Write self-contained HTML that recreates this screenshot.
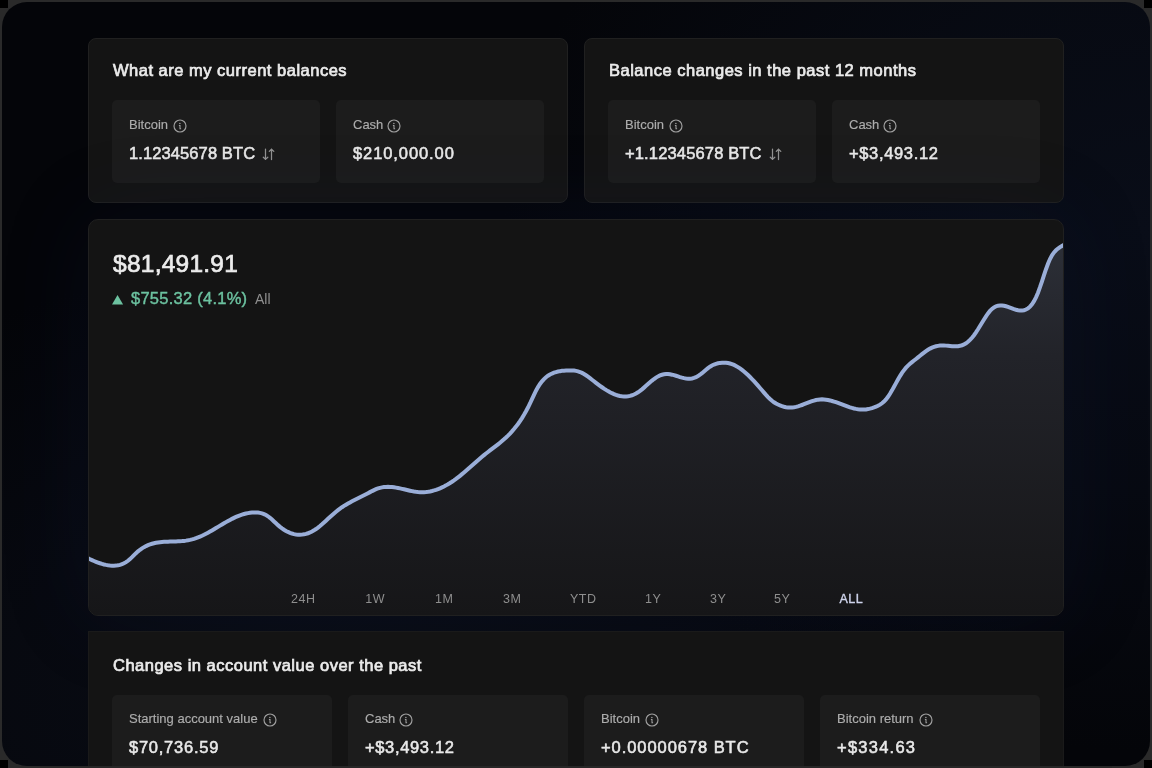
<!DOCTYPE html>
<html><head><meta charset="utf-8">
<style>
*{box-sizing:border-box;margin:0;padding:0}
html,body{width:1152px;height:768px;overflow:hidden;background:#2a2a2a;font-family:"Liberation Sans",sans-serif}
.a{position:absolute;white-space:nowrap;line-height:20px;will-change:transform}
.corner{position:absolute;width:8px;height:8px;background:#000}
.frame{position:absolute;left:2px;top:2px;width:1148px;height:764px;border-radius:25px;overflow:hidden;
 background:radial-gradient(ellipse 650px 520px at 1150px 230px,#090d18 0%,rgba(9,13,24,0.6) 50%,rgba(9,13,24,0) 100%),radial-gradient(ellipse 700px 420px at 330px 680px,#090c15 0%,rgba(9,12,21,0.5) 55%,rgba(9,12,21,0) 100%),#040509;}
.card{position:absolute;background:#141414;border:1px solid #202020;border-radius:8px}
.tile{position:absolute;background:#1c1c1c;border-radius:5px}
.ti{font-size:16.5px;color:#ebebeb;-webkit-text-stroke:0.7px #ebebeb;letter-spacing:0.5px}
.lb{font-size:13px;color:#adadad;-webkit-text-stroke:0.15px #adadad}
.vl{font-size:16.5px;color:#e9e9e9;-webkit-text-stroke:0.55px #e9e9e9;letter-spacing:0.2px}
.tr{font-size:12.5px;color:#8e8e8e;transform:translateX(-50%);letter-spacing:0.6px;text-indent:0.6px}
</style></head><body>
<svg width="0" height="0" style="position:absolute">
 <defs>
  <g id="info"><circle cx="7" cy="7" r="6" fill="none" stroke="#a0a0a0" stroke-width="1.15"/><circle cx="6.9" cy="4.4" r="0.75" fill="#a0a0a0"/><path d="M5.9,6.4 H7 V9.7 H8.1" fill="none" stroke="#a0a0a0" stroke-width="1.05"/></g>
  <g id="arr" fill="none" stroke="#929292" stroke-width="1.25" stroke-linecap="round" stroke-linejoin="round"><path d="M3.5,1 V11.4 M1.3,9.2 L3.5,11.4 L5.8,9.2"/><path d="M9.5,11.6 V1.2 M7.3,3.4 L9.5,1.2 L11.8,3.4"/></g>
 </defs>
</svg>
<div class="corner" style="left:0;top:0"></div><div class="corner" style="right:0;top:0"></div>
<div class="corner" style="left:0;bottom:0"></div><div class="corner" style="right:0;bottom:0"></div>
<div class="frame"></div>

<!-- card 1 -->
<div class="card" style="left:88px;top:38px;width:480px;height:165px"></div>
<div class="tile" style="left:112px;top:100px;width:208px;height:83px"></div>
<div class="tile" style="left:336px;top:100px;width:208px;height:83px"></div>
<div class="a ti" style="left:113px;top:60px">What are my current balances</div>
<div class="a lb" style="left:129px;top:115px">Bitcoin</div>
<svg class="a" style="left:173.4px;top:118.5px" width="14" height="14"><use href="#info"/></svg>
<div class="a vl" style="left:129px;top:143px;letter-spacing:0.1px">1.12345678 BTC</div>
<svg class="a" style="left:262px;top:147.5px" width="14" height="14"><use href="#arr"/></svg>
<div class="a lb" style="left:353px;top:115px">Cash</div>
<svg class="a" style="left:387.4px;top:118.5px" width="14" height="14"><use href="#info"/></svg>
<div class="a vl" style="left:353px;top:143px;letter-spacing:0.91px">$210,000.00</div>

<!-- card 2 -->
<div class="card" style="left:584px;top:38px;width:480px;height:165px"></div>
<div class="tile" style="left:608px;top:100px;width:208px;height:83px"></div>
<div class="tile" style="left:832px;top:100px;width:208px;height:83px"></div>
<div class="a ti" style="left:609px;top:60px">Balance changes in the past 12 months</div>
<div class="a lb" style="left:625px;top:115px">Bitcoin</div>
<svg class="a" style="left:669.4px;top:118.5px" width="14" height="14"><use href="#info"/></svg>
<div class="a vl" style="left:625px;top:143px;letter-spacing:0.15px">+1.12345678 BTC</div>
<svg class="a" style="left:768.5px;top:147.5px" width="14" height="14"><use href="#arr"/></svg>
<div class="a lb" style="left:849px;top:115px">Cash</div>
<svg class="a" style="left:883.4px;top:118.5px" width="14" height="14"><use href="#info"/></svg>
<div class="a vl" style="left:849px;top:143px;letter-spacing:0.65px">+$3,493.12</div>

<!-- chart card -->
<div class="card" style="left:88px;top:219px;width:976px;height:397px;overflow:hidden;border-radius:10px;box-shadow:0 0 90px 0 rgba(25,40,90,0.16)">
 <svg width="976" height="397" viewBox="88 219 976 397" style="position:absolute;left:-1px;top:-1px">
  <defs><linearGradient id="g" x1="0" y1="245" x2="0" y2="615" gradientUnits="userSpaceOnUse">
   <stop offset="0" stop-color="#2c2f37"/><stop offset="0.3" stop-color="#222329"/><stop offset="1" stop-color="#161618"/></linearGradient></defs>
  <path d="M86.0,557.46 L88.0,558.36 L90.0,559.26 L92.0,560.13 L94.0,560.98 L96.0,561.78 L98.0,562.54 L100.0,563.25 L102.0,563.88 L104.0,564.44 L106.0,564.91 L108.0,565.28 L110.0,565.55 L112.0,565.71 L114.0,565.73 L116.0,565.61 L118.0,565.33 L120.0,564.86 L122.0,564.19 L124.0,563.30 L126.0,562.17 L128.0,560.77 L130.0,559.09 L132.0,557.16 L134.0,555.12 L136.0,553.14 L138.0,551.35 L140.0,549.76 L142.0,548.36 L144.0,547.13 L146.0,546.07 L148.0,545.16 L150.0,544.39 L152.0,543.75 L154.0,543.22 L156.0,542.79 L158.0,542.45 L160.0,542.18 L162.0,541.98 L164.0,541.83 L166.0,541.72 L168.0,541.64 L170.0,541.59 L172.0,541.54 L174.0,541.49 L176.0,541.44 L178.0,541.36 L180.0,541.25 L182.0,541.10 L184.0,540.90 L186.0,540.64 L188.0,540.31 L190.0,539.90 L192.0,539.40 L194.0,538.83 L196.0,538.18 L198.0,537.44 L200.0,536.62 L202.0,535.72 L204.0,534.76 L206.0,533.74 L208.0,532.67 L210.0,531.55 L212.0,530.41 L214.0,529.23 L216.0,528.04 L218.0,526.84 L220.0,525.64 L222.0,524.45 L224.0,523.27 L226.0,522.11 L228.0,520.98 L230.0,519.89 L232.0,518.85 L234.0,517.87 L236.0,516.94 L238.0,516.09 L240.0,515.32 L242.0,514.63 L244.0,514.04 L246.0,513.53 L248.0,513.12 L250.0,512.80 L252.0,512.59 L254.0,512.48 L256.0,512.48 L258.0,512.61 L260.0,512.89 L262.0,513.37 L264.0,514.08 L266.0,515.04 L268.0,516.28 L270.0,517.82 L272.0,519.57 L274.0,521.43 L276.0,523.32 L278.0,525.14 L280.0,526.82 L282.0,528.34 L284.0,529.71 L286.0,530.91 L288.0,531.95 L290.0,532.83 L292.0,533.54 L294.0,534.10 L296.0,534.48 L298.0,534.70 L300.0,534.75 L302.0,534.63 L304.0,534.34 L306.0,533.89 L308.0,533.26 L310.0,532.46 L312.0,531.49 L314.0,530.35 L316.0,529.04 L318.0,527.58 L320.0,525.98 L322.0,524.29 L324.0,522.52 L326.0,520.69 L328.0,518.84 L330.0,516.99 L332.0,515.17 L334.0,513.40 L336.0,511.70 L338.0,510.11 L340.0,508.62 L342.0,507.23 L344.0,505.92 L346.0,504.68 L348.0,503.51 L350.0,502.40 L352.0,501.33 L354.0,500.29 L356.0,499.28 L358.0,498.29 L360.0,497.30 L362.0,496.30 L364.0,495.29 L366.0,494.26 L368.0,493.19 L370.0,492.12 L372.0,491.08 L374.0,490.10 L376.0,489.21 L378.0,488.44 L380.0,487.82 L382.0,487.36 L384.0,487.06 L386.0,486.88 L388.0,486.84 L390.0,486.90 L392.0,487.06 L394.0,487.30 L396.0,487.61 L398.0,487.98 L400.0,488.40 L402.0,488.85 L404.0,489.32 L406.0,489.79 L408.0,490.25 L410.0,490.70 L412.0,491.11 L414.0,491.48 L416.0,491.78 L418.0,492.02 L420.0,492.17 L422.0,492.22 L424.0,492.17 L426.0,492.01 L428.0,491.76 L430.0,491.42 L432.0,490.98 L434.0,490.44 L436.0,489.82 L438.0,489.10 L440.0,488.30 L442.0,487.41 L444.0,486.43 L446.0,485.37 L448.0,484.24 L450.0,483.02 L452.0,481.72 L454.0,480.35 L456.0,478.91 L458.0,477.39 L460.0,475.81 L462.0,474.17 L464.0,472.48 L466.0,470.75 L468.0,468.99 L470.0,467.22 L472.0,465.44 L474.0,463.66 L476.0,461.89 L478.0,460.14 L480.0,458.42 L482.0,456.74 L484.0,455.11 L486.0,453.53 L488.0,451.98 L490.0,450.46 L492.0,448.95 L494.0,447.43 L496.0,445.90 L498.0,444.34 L500.0,442.73 L502.0,441.06 L504.0,439.32 L506.0,437.49 L508.0,435.57 L510.0,433.53 L512.0,431.36 L514.0,429.05 L516.0,426.59 L518.0,423.96 L520.0,421.13 L522.0,418.09 L524.0,414.82 L526.0,411.31 L528.0,407.53 L530.0,403.47 L532.0,399.16 L534.0,394.81 L536.0,390.70 L538.0,387.07 L540.0,383.96 L542.0,381.32 L544.0,379.10 L546.0,377.26 L548.0,375.75 L550.0,374.52 L552.0,373.53 L554.0,372.72 L556.0,372.07 L558.0,371.55 L560.0,371.15 L562.0,370.85 L564.0,370.64 L566.0,370.50 L568.0,370.42 L570.0,370.39 L572.0,370.44 L574.0,370.59 L576.0,370.89 L578.0,371.35 L580.0,372.01 L582.0,372.90 L584.0,373.99 L586.0,375.27 L588.0,376.67 L590.0,378.17 L592.0,379.72 L594.0,381.29 L596.0,382.84 L598.0,384.36 L600.0,385.83 L602.0,387.25 L604.0,388.61 L606.0,389.89 L608.0,391.09 L610.0,392.20 L612.0,393.20 L614.0,394.09 L616.0,394.85 L618.0,395.48 L620.0,395.96 L622.0,396.29 L624.0,396.45 L626.0,396.44 L628.0,396.24 L630.0,395.85 L632.0,395.27 L634.0,394.49 L636.0,393.50 L638.0,392.31 L640.0,390.92 L642.0,389.34 L644.0,387.64 L646.0,385.87 L648.0,384.06 L650.0,382.28 L652.0,380.58 L654.0,379.00 L656.0,377.59 L658.0,376.40 L660.0,375.46 L662.0,374.75 L664.0,374.29 L666.0,374.06 L668.0,374.06 L670.0,374.28 L672.0,374.67 L674.0,375.18 L676.0,375.78 L678.0,376.42 L680.0,377.06 L682.0,377.65 L684.0,378.15 L686.0,378.53 L688.0,378.72 L690.0,378.70 L692.0,378.45 L694.0,377.94 L696.0,377.16 L698.0,376.10 L700.0,374.74 L702.0,373.15 L704.0,371.45 L706.0,369.72 L708.0,368.10 L710.0,366.67 L712.0,365.49 L714.0,364.54 L716.0,363.80 L718.0,363.26 L720.0,362.90 L722.0,362.70 L724.0,362.66 L726.0,362.77 L728.0,363.05 L730.0,363.49 L732.0,364.12 L734.0,364.93 L736.0,365.92 L738.0,367.08 L740.0,368.39 L742.0,369.86 L744.0,371.46 L746.0,373.19 L748.0,375.04 L750.0,376.99 L752.0,379.03 L754.0,381.16 L756.0,383.36 L758.0,385.62 L760.0,387.94 L762.0,390.29 L764.0,392.64 L766.0,394.92 L768.0,397.07 L770.0,399.04 L772.0,400.76 L774.0,402.24 L776.0,403.49 L778.0,404.54 L780.0,405.41 L782.0,406.14 L784.0,406.73 L786.0,407.17 L788.0,407.45 L790.0,407.57 L792.0,407.51 L794.0,407.26 L796.0,406.87 L798.0,406.34 L800.0,405.71 L802.0,405.00 L804.0,404.24 L806.0,403.45 L808.0,402.66 L810.0,401.90 L812.0,401.20 L814.0,400.57 L816.0,400.05 L818.0,399.66 L820.0,399.43 L822.0,399.36 L824.0,399.44 L826.0,399.66 L828.0,399.99 L830.0,400.43 L832.0,400.96 L834.0,401.56 L836.0,402.22 L838.0,402.93 L840.0,403.66 L842.0,404.41 L844.0,405.17 L846.0,405.91 L848.0,406.62 L850.0,407.29 L852.0,407.90 L854.0,408.44 L856.0,408.89 L858.0,409.25 L860.0,409.49 L862.0,409.59 L864.0,409.56 L866.0,409.39 L868.0,409.09 L870.0,408.66 L872.0,408.11 L874.0,407.45 L876.0,406.69 L878.0,405.78 L880.0,404.67 L882.0,403.28 L884.0,401.55 L886.0,399.40 L888.0,396.78 L890.0,393.73 L892.0,390.37 L894.0,386.80 L896.0,383.16 L898.0,379.55 L900.0,376.09 L902.0,372.91 L904.0,370.10 L906.0,367.69 L908.0,365.61 L910.0,363.78 L912.0,362.11 L914.0,360.54 L916.0,358.97 L918.0,357.36 L920.0,355.73 L922.0,354.11 L924.0,352.55 L926.0,351.08 L928.0,349.75 L930.0,348.60 L932.0,347.64 L934.0,346.87 L936.0,346.28 L938.0,345.85 L940.0,345.59 L942.0,345.47 L944.0,345.50 L946.0,345.62 L948.0,345.80 L950.0,346.01 L952.0,346.18 L954.0,346.29 L956.0,346.30 L958.0,346.16 L960.0,345.82 L962.0,345.26 L964.0,344.42 L966.0,343.27 L968.0,341.77 L970.0,339.94 L972.0,337.76 L974.0,335.24 L976.0,332.40 L978.0,329.29 L980.0,326.02 L982.0,322.70 L984.0,319.43 L986.0,316.31 L988.0,313.44 L990.0,310.93 L992.0,308.89 L994.0,307.36 L996.0,306.32 L998.0,305.69 L1000.0,305.43 L1002.0,305.48 L1004.0,305.78 L1006.0,306.28 L1008.0,306.91 L1010.0,307.63 L1012.0,308.38 L1014.0,309.10 L1016.0,309.73 L1018.0,310.22 L1020.0,310.51 L1022.0,310.54 L1024.0,310.25 L1026.0,309.55 L1028.0,308.37 L1030.0,306.64 L1032.0,304.28 L1034.0,301.21 L1036.0,297.36 L1038.0,292.66 L1040.0,287.21 L1042.0,281.28 L1044.0,275.18 L1046.0,269.21 L1048.0,263.73 L1050.0,259.05 L1052.0,255.28 L1054.0,252.43 L1056.0,250.28 L1058.0,248.58 L1060.0,247.17 L1062.0,245.92 L1064.0,244.72 L1066.0,243.43 L1068.0,241.95 L1068,620 L86,620 Z" fill="url(#g)"/>
  <path d="M86.0,557.46 L88.0,558.36 L90.0,559.26 L92.0,560.13 L94.0,560.98 L96.0,561.78 L98.0,562.54 L100.0,563.25 L102.0,563.88 L104.0,564.44 L106.0,564.91 L108.0,565.28 L110.0,565.55 L112.0,565.71 L114.0,565.73 L116.0,565.61 L118.0,565.33 L120.0,564.86 L122.0,564.19 L124.0,563.30 L126.0,562.17 L128.0,560.77 L130.0,559.09 L132.0,557.16 L134.0,555.12 L136.0,553.14 L138.0,551.35 L140.0,549.76 L142.0,548.36 L144.0,547.13 L146.0,546.07 L148.0,545.16 L150.0,544.39 L152.0,543.75 L154.0,543.22 L156.0,542.79 L158.0,542.45 L160.0,542.18 L162.0,541.98 L164.0,541.83 L166.0,541.72 L168.0,541.64 L170.0,541.59 L172.0,541.54 L174.0,541.49 L176.0,541.44 L178.0,541.36 L180.0,541.25 L182.0,541.10 L184.0,540.90 L186.0,540.64 L188.0,540.31 L190.0,539.90 L192.0,539.40 L194.0,538.83 L196.0,538.18 L198.0,537.44 L200.0,536.62 L202.0,535.72 L204.0,534.76 L206.0,533.74 L208.0,532.67 L210.0,531.55 L212.0,530.41 L214.0,529.23 L216.0,528.04 L218.0,526.84 L220.0,525.64 L222.0,524.45 L224.0,523.27 L226.0,522.11 L228.0,520.98 L230.0,519.89 L232.0,518.85 L234.0,517.87 L236.0,516.94 L238.0,516.09 L240.0,515.32 L242.0,514.63 L244.0,514.04 L246.0,513.53 L248.0,513.12 L250.0,512.80 L252.0,512.59 L254.0,512.48 L256.0,512.48 L258.0,512.61 L260.0,512.89 L262.0,513.37 L264.0,514.08 L266.0,515.04 L268.0,516.28 L270.0,517.82 L272.0,519.57 L274.0,521.43 L276.0,523.32 L278.0,525.14 L280.0,526.82 L282.0,528.34 L284.0,529.71 L286.0,530.91 L288.0,531.95 L290.0,532.83 L292.0,533.54 L294.0,534.10 L296.0,534.48 L298.0,534.70 L300.0,534.75 L302.0,534.63 L304.0,534.34 L306.0,533.89 L308.0,533.26 L310.0,532.46 L312.0,531.49 L314.0,530.35 L316.0,529.04 L318.0,527.58 L320.0,525.98 L322.0,524.29 L324.0,522.52 L326.0,520.69 L328.0,518.84 L330.0,516.99 L332.0,515.17 L334.0,513.40 L336.0,511.70 L338.0,510.11 L340.0,508.62 L342.0,507.23 L344.0,505.92 L346.0,504.68 L348.0,503.51 L350.0,502.40 L352.0,501.33 L354.0,500.29 L356.0,499.28 L358.0,498.29 L360.0,497.30 L362.0,496.30 L364.0,495.29 L366.0,494.26 L368.0,493.19 L370.0,492.12 L372.0,491.08 L374.0,490.10 L376.0,489.21 L378.0,488.44 L380.0,487.82 L382.0,487.36 L384.0,487.06 L386.0,486.88 L388.0,486.84 L390.0,486.90 L392.0,487.06 L394.0,487.30 L396.0,487.61 L398.0,487.98 L400.0,488.40 L402.0,488.85 L404.0,489.32 L406.0,489.79 L408.0,490.25 L410.0,490.70 L412.0,491.11 L414.0,491.48 L416.0,491.78 L418.0,492.02 L420.0,492.17 L422.0,492.22 L424.0,492.17 L426.0,492.01 L428.0,491.76 L430.0,491.42 L432.0,490.98 L434.0,490.44 L436.0,489.82 L438.0,489.10 L440.0,488.30 L442.0,487.41 L444.0,486.43 L446.0,485.37 L448.0,484.24 L450.0,483.02 L452.0,481.72 L454.0,480.35 L456.0,478.91 L458.0,477.39 L460.0,475.81 L462.0,474.17 L464.0,472.48 L466.0,470.75 L468.0,468.99 L470.0,467.22 L472.0,465.44 L474.0,463.66 L476.0,461.89 L478.0,460.14 L480.0,458.42 L482.0,456.74 L484.0,455.11 L486.0,453.53 L488.0,451.98 L490.0,450.46 L492.0,448.95 L494.0,447.43 L496.0,445.90 L498.0,444.34 L500.0,442.73 L502.0,441.06 L504.0,439.32 L506.0,437.49 L508.0,435.57 L510.0,433.53 L512.0,431.36 L514.0,429.05 L516.0,426.59 L518.0,423.96 L520.0,421.13 L522.0,418.09 L524.0,414.82 L526.0,411.31 L528.0,407.53 L530.0,403.47 L532.0,399.16 L534.0,394.81 L536.0,390.70 L538.0,387.07 L540.0,383.96 L542.0,381.32 L544.0,379.10 L546.0,377.26 L548.0,375.75 L550.0,374.52 L552.0,373.53 L554.0,372.72 L556.0,372.07 L558.0,371.55 L560.0,371.15 L562.0,370.85 L564.0,370.64 L566.0,370.50 L568.0,370.42 L570.0,370.39 L572.0,370.44 L574.0,370.59 L576.0,370.89 L578.0,371.35 L580.0,372.01 L582.0,372.90 L584.0,373.99 L586.0,375.27 L588.0,376.67 L590.0,378.17 L592.0,379.72 L594.0,381.29 L596.0,382.84 L598.0,384.36 L600.0,385.83 L602.0,387.25 L604.0,388.61 L606.0,389.89 L608.0,391.09 L610.0,392.20 L612.0,393.20 L614.0,394.09 L616.0,394.85 L618.0,395.48 L620.0,395.96 L622.0,396.29 L624.0,396.45 L626.0,396.44 L628.0,396.24 L630.0,395.85 L632.0,395.27 L634.0,394.49 L636.0,393.50 L638.0,392.31 L640.0,390.92 L642.0,389.34 L644.0,387.64 L646.0,385.87 L648.0,384.06 L650.0,382.28 L652.0,380.58 L654.0,379.00 L656.0,377.59 L658.0,376.40 L660.0,375.46 L662.0,374.75 L664.0,374.29 L666.0,374.06 L668.0,374.06 L670.0,374.28 L672.0,374.67 L674.0,375.18 L676.0,375.78 L678.0,376.42 L680.0,377.06 L682.0,377.65 L684.0,378.15 L686.0,378.53 L688.0,378.72 L690.0,378.70 L692.0,378.45 L694.0,377.94 L696.0,377.16 L698.0,376.10 L700.0,374.74 L702.0,373.15 L704.0,371.45 L706.0,369.72 L708.0,368.10 L710.0,366.67 L712.0,365.49 L714.0,364.54 L716.0,363.80 L718.0,363.26 L720.0,362.90 L722.0,362.70 L724.0,362.66 L726.0,362.77 L728.0,363.05 L730.0,363.49 L732.0,364.12 L734.0,364.93 L736.0,365.92 L738.0,367.08 L740.0,368.39 L742.0,369.86 L744.0,371.46 L746.0,373.19 L748.0,375.04 L750.0,376.99 L752.0,379.03 L754.0,381.16 L756.0,383.36 L758.0,385.62 L760.0,387.94 L762.0,390.29 L764.0,392.64 L766.0,394.92 L768.0,397.07 L770.0,399.04 L772.0,400.76 L774.0,402.24 L776.0,403.49 L778.0,404.54 L780.0,405.41 L782.0,406.14 L784.0,406.73 L786.0,407.17 L788.0,407.45 L790.0,407.57 L792.0,407.51 L794.0,407.26 L796.0,406.87 L798.0,406.34 L800.0,405.71 L802.0,405.00 L804.0,404.24 L806.0,403.45 L808.0,402.66 L810.0,401.90 L812.0,401.20 L814.0,400.57 L816.0,400.05 L818.0,399.66 L820.0,399.43 L822.0,399.36 L824.0,399.44 L826.0,399.66 L828.0,399.99 L830.0,400.43 L832.0,400.96 L834.0,401.56 L836.0,402.22 L838.0,402.93 L840.0,403.66 L842.0,404.41 L844.0,405.17 L846.0,405.91 L848.0,406.62 L850.0,407.29 L852.0,407.90 L854.0,408.44 L856.0,408.89 L858.0,409.25 L860.0,409.49 L862.0,409.59 L864.0,409.56 L866.0,409.39 L868.0,409.09 L870.0,408.66 L872.0,408.11 L874.0,407.45 L876.0,406.69 L878.0,405.78 L880.0,404.67 L882.0,403.28 L884.0,401.55 L886.0,399.40 L888.0,396.78 L890.0,393.73 L892.0,390.37 L894.0,386.80 L896.0,383.16 L898.0,379.55 L900.0,376.09 L902.0,372.91 L904.0,370.10 L906.0,367.69 L908.0,365.61 L910.0,363.78 L912.0,362.11 L914.0,360.54 L916.0,358.97 L918.0,357.36 L920.0,355.73 L922.0,354.11 L924.0,352.55 L926.0,351.08 L928.0,349.75 L930.0,348.60 L932.0,347.64 L934.0,346.87 L936.0,346.28 L938.0,345.85 L940.0,345.59 L942.0,345.47 L944.0,345.50 L946.0,345.62 L948.0,345.80 L950.0,346.01 L952.0,346.18 L954.0,346.29 L956.0,346.30 L958.0,346.16 L960.0,345.82 L962.0,345.26 L964.0,344.42 L966.0,343.27 L968.0,341.77 L970.0,339.94 L972.0,337.76 L974.0,335.24 L976.0,332.40 L978.0,329.29 L980.0,326.02 L982.0,322.70 L984.0,319.43 L986.0,316.31 L988.0,313.44 L990.0,310.93 L992.0,308.89 L994.0,307.36 L996.0,306.32 L998.0,305.69 L1000.0,305.43 L1002.0,305.48 L1004.0,305.78 L1006.0,306.28 L1008.0,306.91 L1010.0,307.63 L1012.0,308.38 L1014.0,309.10 L1016.0,309.73 L1018.0,310.22 L1020.0,310.51 L1022.0,310.54 L1024.0,310.25 L1026.0,309.55 L1028.0,308.37 L1030.0,306.64 L1032.0,304.28 L1034.0,301.21 L1036.0,297.36 L1038.0,292.66 L1040.0,287.21 L1042.0,281.28 L1044.0,275.18 L1046.0,269.21 L1048.0,263.73 L1050.0,259.05 L1052.0,255.28 L1054.0,252.43 L1056.0,250.28 L1058.0,248.58 L1060.0,247.17 L1062.0,245.92 L1064.0,244.72 L1066.0,243.43 L1068.0,241.95" fill="none" stroke="#9aaed8" stroke-width="4" stroke-linecap="round"/>
 </svg>
</div>
<div class="a" style="left:113px;top:251.5px;font-size:24.5px;line-height:24px;color:#ececec;-webkit-text-stroke:0.7px #ececec;letter-spacing:0.25px">$81,491.91</div>
<svg class="a" style="left:112px;top:294.5px" width="12" height="11"><path d="M5.55,0 L11.1,9.6 L0,9.6 Z" fill="#6cc2a0"/></svg>
<div class="a" style="left:131px;top:287.5px;font-size:16.5px;color:#6cc2a0;-webkit-text-stroke:0.4px #6cc2a0;letter-spacing:0.25px">$755.32 (4.1%)</div>
<div class="a" style="left:255px;top:288.5px;font-size:14px;color:#8f8f8f">All</div>
<div class="a tr" style="left:302.5px;top:588.7px">24H</div>
<div class="a tr" style="left:374.8px;top:588.7px">1W</div>
<div class="a tr" style="left:443.5px;top:588.7px">1M</div>
<div class="a tr" style="left:511.8px;top:588.7px">3M</div>
<div class="a tr" style="left:583.3px;top:588.7px">YTD</div>
<div class="a tr" style="left:653px;top:588.7px">1Y</div>
<div class="a tr" style="left:717.5px;top:588.7px">3Y</div>
<div class="a tr" style="left:782px;top:588.7px">5Y</div>
<div class="a tr" style="left:851.4px;top:589px;color:#cfd4ec;-webkit-text-stroke:0.35px #cfd4ec;letter-spacing:0.5px">ALL</div>

<!-- bottom card -->
<div class="card" style="left:88px;top:631px;width:976px;height:140px;border-radius:0;border-color:#1a1a1a"></div>
<div class="tile" style="left:112px;top:695px;width:220px;height:80px"></div>
<div class="tile" style="left:348px;top:695px;width:220px;height:80px"></div>
<div class="tile" style="left:584px;top:695px;width:220px;height:80px"></div>
<div class="tile" style="left:820px;top:695px;width:220px;height:80px"></div>
<div class="a ti" style="left:113px;top:655px">Changes in account value over the past</div>
<div class="a lb" style="left:129px;top:709px">Starting account value</div>
<svg class="a" style="left:263.4px;top:712.5px" width="14" height="14"><use href="#info"/></svg>
<div class="a vl" style="left:129px;top:737px;letter-spacing:0.75px">$70,736.59</div>
<div class="a lb" style="left:365px;top:709px">Cash</div>
<svg class="a" style="left:399.4px;top:712.5px" width="14" height="14"><use href="#info"/></svg>
<div class="a vl" style="left:365px;top:737px;letter-spacing:0.65px">+$3,493.12</div>
<div class="a lb" style="left:601px;top:709px">Bitcoin</div>
<svg class="a" style="left:645.4px;top:712.5px" width="14" height="14"><use href="#info"/></svg>
<div class="a vl" style="left:601px;top:737px;letter-spacing:0.94px">+0.00000678 BTC</div>
<div class="a lb" style="left:837px;top:709px">Bitcoin return</div>
<svg class="a" style="left:919.4px;top:712.5px" width="14" height="14"><use href="#info"/></svg>
<div class="a vl" style="left:837px;top:737px;letter-spacing:1.25px">+$334.63</div>
<div style="position:absolute;left:40px;top:766px;width:1072px;height:2px;background:#272727"></div>
</body></html>
